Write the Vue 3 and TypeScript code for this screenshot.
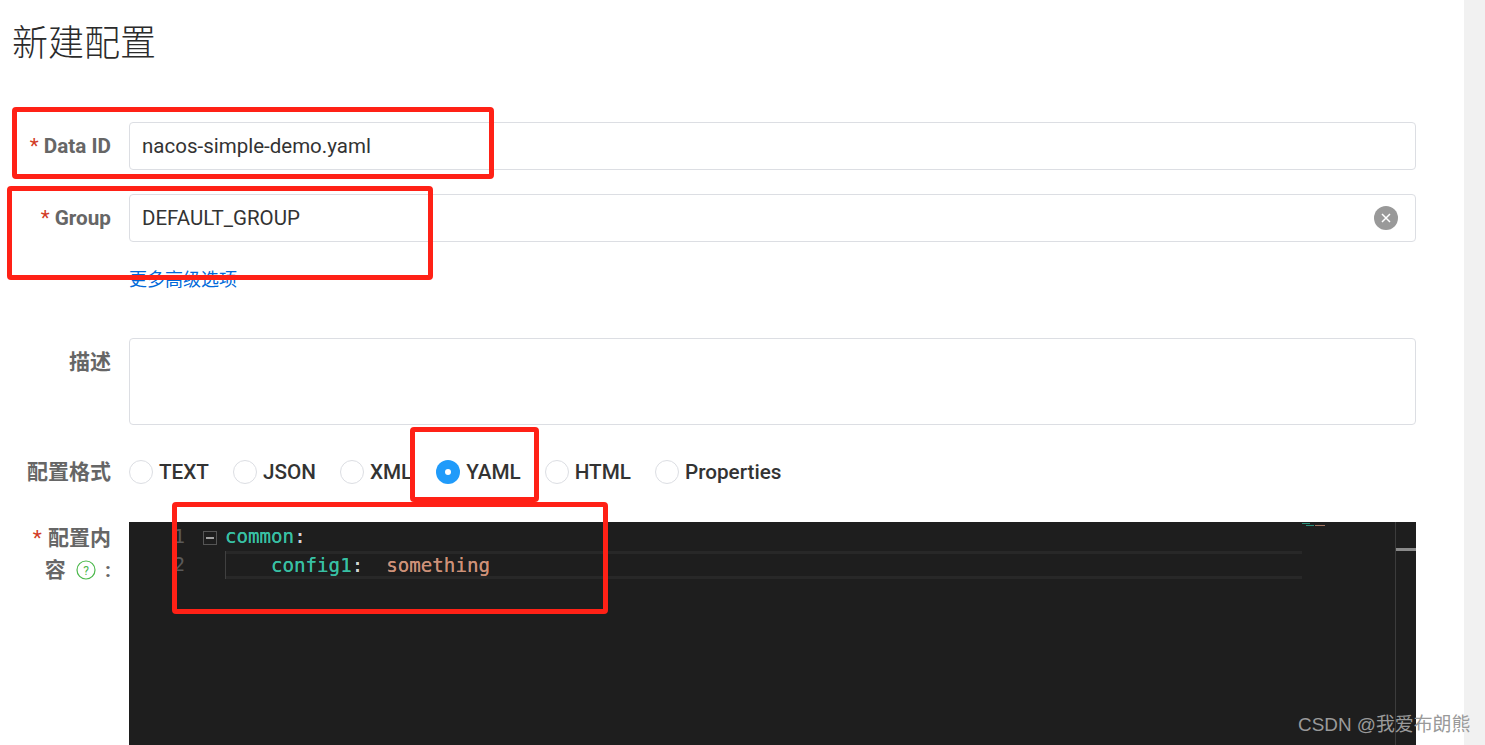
<script setup lang="ts">
const formats: string[] = ['TEXT', 'JSON', 'XML', 'YAML', 'HTML', 'Properties']
const selected = 'YAML'
</script>

<template>
  <div class="page">
    <main class="content">
      <h1 class="title">新建配置</h1>

      <div class="row row-data">
        <label class="label"><span class="star">*</span> Data ID</label>
        <div class="field">nacos-simple-demo.yaml</div>
      </div>

      <div class="row row-group">
        <label class="label"><span class="star">*</span> Group</label>
        <div class="field field-clear">
          <span>DEFAULT_GROUP</span>
          <svg class="clear" viewBox="0 0 24 24" width="24" height="24">
            <circle cx="12" cy="12" r="12" fill="#999" />
            <path d="M8 8l8 8M16 8l-8 8" stroke="#fff" stroke-width="1.5" fill="none" />
          </svg>
        </div>
      </div>

      <div class="row row-link">
        <div class="label"></div>
        <a class="more">更多高级选项</a>
      </div>

      <div class="row row-desc">
        <label class="label">描述</label>
        <div class="field textarea"></div>
      </div>

      <div class="row row-format">
        <label class="label">配置格式</label>
        <div class="radios">
          <div v-for="f in formats" :key="f" class="radio">
            <span class="dot" :class="{ on: f === selected }"></span>
            <span>{{ f }}</span>
          </div>
        </div>
      </div>

      <div class="row row-editor">
        <label class="label label-wrap">
          <span class="star star-cjk">*</span> 配置内<br />容
          <svg class="help" viewBox="0 0 20 20" width="20" height="20">
            <circle cx="10" cy="10" r="9" fill="none" stroke="#4cb84c" stroke-width="1.2" />
            <text x="10" y="14.5" text-anchor="middle" font-size="12" font-weight="400" fill="#4cb84c" font-family="Roboto, sans-serif">?</text>
          </svg>
          <span class="colon">:</span>
        </label>
        <div class="editor">
          <div class="code">
            <div class="line">
              <span class="num">1</span>
              <span class="fold"><i></i></span>
              <span class="src"><span class="key">common</span><span class="punc">:</span></span>
            </div>
            <div class="line line-current">
              <span class="num">2</span>
              <span class="fold-empty"></span>
              <span class="src src-current"><span class="indent"></span><span class="key">config1</span><span class="punc">:&nbsp;&nbsp;</span><span class="val">something</span></span>
            </div>
          </div>
          <div class="minimap"><span class="mini-a"></span><span class="mini-b"></span><span class="mini-c"></span></div>
          <div class="ruler"><span class="thumb"></span></div>
        </div>
      </div>
    </main>

    <aside class="scrollbar"></aside>

    <div class="mark m1"></div>
    <div class="mark m2"></div>
    <div class="mark m3"></div>
    <div class="mark m4"></div>
    <div class="watermark">CSDN @我爱布朗熊</div>
  </div>
</template>

<style>
html, body { margin: 0; background: #fff; overflow: hidden; }
</style>

<style scoped>
.page {
  position: relative;
  display: flex;
  width: 1485px;
  height: 745px;
  overflow: hidden;
  background: #fff;
  font-family: Roboto, "Noto Sans CJK SC", sans-serif;
  color: #333;
}
.content { width: 1416px; flex: none; }
.scrollbar { width: 21px; margin-left: 48px; flex: none; background: #f1f1f1; }
.title {
  margin: 0;
  padding: 17px 0 0 12px;
  height: 106px;
  box-sizing: border-box;
  font-size: 36px;
  line-height: 54px;
  font-weight: 300;
  color: #2b2b2b;
}
.row { display: flex; margin-top: 16px; }
.row-data { margin-top: 16px; }
.row-group { margin-top: 24px; }
.label {
  flex: none;
  width: 111px;
  margin-right: 18px;
  text-align: right;
  font-size: 21px;
  font-weight: 700;
  line-height: 48px;
  color: #666;
}
.row-data .label, .row-group .label { font-size: 20.7px; }
.star { color: #d23c26; font-weight: 400; }
.star-cjk { margin-right: 1px; }
.field {
  flex: 1;
  height: 48px;
  box-sizing: border-box;
  border: 1px solid #dcdee3;
  border-radius: 4px;
  padding: 0 12px;
  font-size: 20.5px;
  line-height: 46px;
  color: #333;
}
.field-clear { display: flex; justify-content: space-between; align-items: center; line-height: normal; }
.clear { margin-right: 5px; flex: none; }
.row-link { margin-top: 24px; height: 28px; }
.row-link .label { line-height: 28px; }
.more { font-size: 18px; line-height: 28px; color: #0069d9; height: 28px; }
.row-desc { margin-top: 44px; }
.textarea { height: 87px; }
.row-format { margin-top: 23px; align-items: center; height: 48px; }
.radios { display: flex; gap: 24px; }
.radio {
  display: flex;
  align-items: center;
  gap: 6px;
  font-size: 20.7px;
  font-weight: 500;
  color: #333;
  line-height: 24px;
}
.dot {
  width: 24px;
  height: 24px;
  box-sizing: border-box;
  border-radius: 50%;
  border: 1px solid #dcdee3;
  background: #fff;
  position: relative;
}
.dot.on { background: #209bfa; border: 0; }
.dot.on::after {
  content: "";
  position: absolute;
  left: 9px;
  top: 9px;
  width: 6px;
  height: 6px;
  border-radius: 50%;
  background: #fff;
}
.row-editor { margin-top: 26px; }
.label-wrap { line-height: 32px; height: 80px; }
.help { vertical-align: -3px; margin: 0 3px 0 5px; }
.colon { margin-left: 6px; }
.editor {
  position: relative;
  flex: 1;
  height: 223px;
  background: #1e1e1e;
  font-family: "DejaVu Sans Mono", monospace;
  font-size: 19.15px;
}
.code { padding-top: 1px; }
.line { display: flex; height: 28px; line-height: 28px; }
.num { width: 56px; text-align: right; color: #5a5a5a; flex: none; }
.fold {
  width: 14px;
  height: 14px;
  margin: 8px 8px 0 18px;
  box-sizing: border-box;
  border: 1px solid #555;
  flex: none;
  position: relative;
}
.fold i { position: absolute; left: 2px; top: 5px; width: 8px; height: 2px; background: #a0a0a0; }
.fold-empty { width: 40px; flex: none; }
.src { white-space: pre; text-shadow: 0 0 0.6px currentColor; }
.src-current {
  flex: none;
  width: 1077px;
  height: 28px;
  box-sizing: border-box;
  border-top: 3px solid #282828;
  border-bottom: 3px solid #282828;
  line-height: 24px;
  display: flex;
}
.indent { display: inline-block; width: 46px; height: 28px; margin-top: -3px; box-sizing: border-box; border-left: 1px solid #404040; flex: none; }
.key { color: #38c0a4; }
.punc { color: #d4d4d4; }
.val { color: #ce9178; }
.minimap { position: absolute; left: 1173px; top: 0; width: 24px; height: 6px; opacity: 0.75; }
.mini-a { position: absolute; left: 0; top: 1px; width: 8px; height: 1px; background: #2fb89a; }
.mini-b { position: absolute; left: 4px; top: 3px; width: 8px; height: 1px; background: #2fb89a; }
.mini-c { position: absolute; left: 13px; top: 3px; width: 10px; height: 1px; background: #ce9178; }
.ruler {
  position: absolute;
  right: 20px;
  top: 0;
  bottom: 0;
  width: 1px;
  background: #3c3c3c;
}
.thumb { position: absolute; left: 1px; top: 26px; width: 20px; height: 3px; background: #8a8a8a; }
.mark {
  position: absolute;
  box-sizing: border-box;
  border: 5px solid #ff2116;
  border-radius: 4px;
  pointer-events: none;
}
.m1 { left: 12px; top: 107px; width: 482px; height: 72px; }
.m2 { left: 7px; top: 186px; width: 426px; height: 94px; }
.m3 { left: 410px; top: 427px; width: 129px; height: 75px; }
.m4 { left: 172px; top: 502px; width: 436px; height: 112px; }
.watermark {
  position: absolute;
  left: 1298px;
  top: 712px;
  font-family: "Liberation Sans", "Noto Sans CJK SC", sans-serif;
  font-size: 18.9px;
  line-height: 26px;
  color: #9a9a9a;
  white-space: nowrap;
}
</style>
